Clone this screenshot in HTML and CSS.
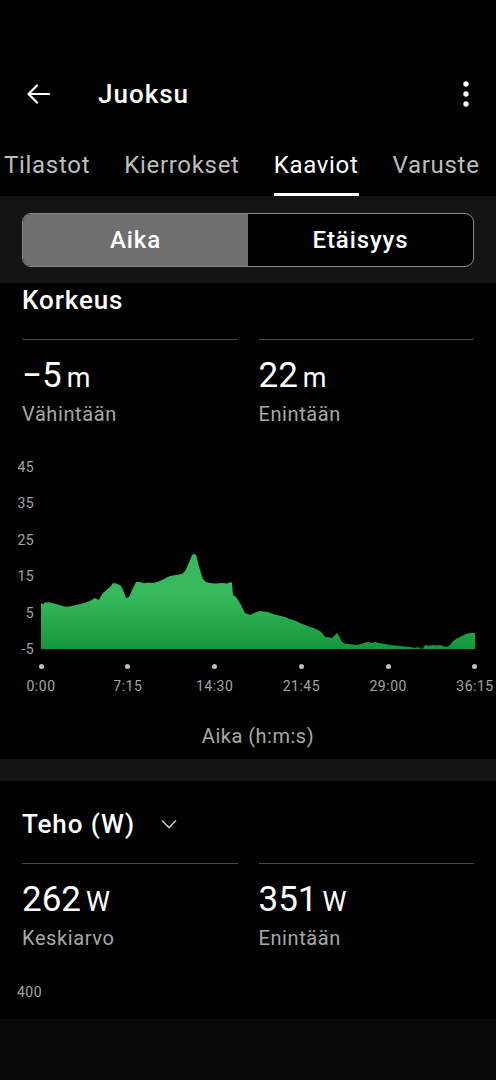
FILE: index.html
```html
<!DOCTYPE html>
<html lang="fi">
<head>
  <meta charset="UTF-8" />
  <title>Juoksu – Kaaviot</title>
  <link rel="stylesheet" href="styles.css">
</head>
<body>

  <div class="appbar">
    <svg class="back" width="24" height="24" viewBox="0 0 24 24">
      <path d="M23 12H3 M11 3.5L2.5 12L11 20.5" fill="none" stroke="#fff" stroke-width="2.2" stroke-linecap="round" stroke-linejoin="round"/>
    </svg>
    <div class="title">Juoksu</div>
    <svg class="kebab" width="8" height="26" viewBox="0 0 8 26">
      <circle cx="4" cy="3" r="2.7" fill="#fff"/>
      <circle cx="4" cy="13" r="2.7" fill="#fff"/>
      <circle cx="4" cy="23" r="2.7" fill="#fff"/>
    </svg>
  </div>

  <div class="tabs">
    <div class="tab">Tilastot</div>
    <div class="tab">Kierrokset</div>
    <div class="tab active">Kaaviot</div>
    <div class="tab">Varuste</div>
  </div>

  <div class="band">
    <div class="segment">
      <div class="seg on">Aika</div>
      <div class="seg">Etäisyys</div>
    </div>
  </div>

  <!-- korkeus -->
  <div class="section first">
    <div class="heading">Korkeus</div>
    <div class="stats">
      <div class="stat">
        <div class="val"><span class="num">−5</span><span class="unit">m</span></div>
        <div class="lbl">Vähintään</div>
      </div>
      <div class="stat">
        <div class="val"><span class="num">22</span><span class="unit">m</span></div>
        <div class="lbl">Enintään</div>
      </div>
    </div>
  </div>

  <div class="chart">
    <div class="yaxis">
      <span>45</span><span>35</span><span>25</span><span>15</span><span>5</span><span>-5</span>
    </div>
    <svg class="plot" width="434" height="191" viewBox="0 0 434 191">
      <defs>
        <linearGradient id="green" x1="0" y1="0" x2="0" y2="1">
          <stop offset="0.45" stop-color="#37b85c"/>
          <stop offset="1" stop-color="#14963c"/>
        </linearGradient>
      </defs>
      <path fill="url(#green)" d="M0 190 L0 144 L2 145 L4 143.5 L8 143.2 L11 144 L16 145.2 L20 146.5 L25 147.7 L30 147.2 L35 146 L39 145 L44 143.8 L49 142 L52 140.2 L54 139 L56 140 L58 141 L60 137 L62 134 L66 130.5 L69 128 L72 124 L75 124.5 L79 126 L81 128.5 L82 131 L84 136 L85 139 L88 138 L91 131 L95 123 L99 123 L103 124.2 L108 123.5 L112 124 L116 123 L121 121 L125 119 L129 117 L135 116 L141 115 L144 112 L146 108 L149 101 L151 96 L153 95 L155 96 L156 99 L157 104 L160 114 L162 120 L165 123 L169 124 L175 124.5 L181 124 L186 124.6 L190 123 L191 124 L192 136 L195 138 L197 141 L200 146 L204 154 L209 156 L213 154 L219 152 L223 152.6 L227 153 L232 155 L238 156.5 L244 158 L248 159.8 L252 161 L255 162 L259 164 L263 165.5 L269 168 L273 169 L279 172 L282 175 L284 178 L288 178.2 L291 179 L294 176 L296 174 L298 177 L301 183 L304 184.5 L307 185 L312 185.6 L316 186 L320 185 L324 183.4 L327 183 L331 184 L334 183 L338 184 L344 185 L350 186.2 L355 186.6 L359 187 L364 187.5 L369 188 L374 189 L377 188 L379 189.5 L381 190 L383 188 L384 186 L388 186.8 L392 186 L396 186.4 L399 186 L402 187 L406 188 L409 186 L411 183 L415 180 L419 178 L424 175.5 L429 174 L434 174 L434 190 Z"/>
    </svg>
  </div>

  <div class="xaxis">
    <div class="tick"><i></i><span>0:00</span></div>
    <div class="tick"><i></i><span>7:15</span></div>
    <div class="tick"><i></i><span>14:30</span></div>
    <div class="tick"><i></i><span>21:45</span></div>
    <div class="tick"><i></i><span>29:00</span></div>
    <div class="tick"><i></i><span>36:15</span></div>
  </div>

  <div class="xtitle">Aika (h:m:s)</div>

  <div class="gap"></div>

  <!-- teho -->
  <div class="section">
    <div class="heading">Teho (W)
      <svg class="chev" width="16" height="10" viewBox="0 0 16 10">
        <path d="M1 1.5L8 8.5L15 1.5" fill="none" stroke="#c4c4c4" stroke-width="1.6"/>
      </svg>
    </div>
    <div class="stats">
      <div class="stat">
        <div class="val"><span class="num">262</span><span class="unit">W</span></div>
        <div class="lbl">Keskiarvo</div>
      </div>
      <div class="stat">
        <div class="val"><span class="num">351</span><span class="unit">W</span></div>
        <div class="lbl">Enintään</div>
      </div>
    </div>
  </div>

  <div class="ylabel">400</div>

  <div class="bottom"></div>

</body>
</html>
```

FILE: styles.css
```css
body {
  margin: 0;
  background: #000;
  color: #fff;
  font-family: Roboto, "Noto Sans", sans-serif;
  width: 496px;
  overflow: hidden;
}
.appbar {
  display: flex;
  align-items: center;
  height: 68px;
  padding: 60px 26px 0 26px;
}
.title {
  margin-left: 48px;
  font-size: 26px;
  font-weight: 500;
  letter-spacing: 1px;
  flex: 1;
}
.tabs {
  display: flex;
  gap: 34px;
  padding-left: 4px;
  white-space: nowrap;
  overflow: hidden;
}
.tab {
  font-size: 24px;
  line-height: 28px;
  letter-spacing: 0.7px;
  padding: 23px 0 14px;
  color: #bdbdbd;
  border-bottom: 3px solid transparent;
}
.tab.active {
  color: #fff;
  border-bottom-color: #fff;
}
.band {
  background: #141414;
  padding: 17px 22px 16px;
}
.segment {
  display: grid;
  grid-template-columns: 1fr 1fr;
  height: 52px;
  border: 1px solid #8a8a8a;
  border-radius: 9px;
  overflow: hidden;
  background: #000;
}
.seg {
  display: flex;
  align-items: center;
  justify-content: center;
  font-size: 24px;
  font-weight: 500;
  letter-spacing: 0.9px;
}
.seg.on {
  background: #6f6f6f;
}
.section {
  padding: 28px 22px 0;
}
.section.first {
  padding-top: 2px;
}
.heading {
  display: flex;
  align-items: center;
  font-size: 26px;
  line-height: 30px;
  font-weight: 500;
  letter-spacing: 0.9px;
}
.chev {
  margin-left: 26px;
}
.stats {
  display: grid;
  grid-template-columns: 1fr 1fr;
  gap: 21px;
  margin-top: 24px;
}
.stat {
  border-top: 1.5px solid #4a4a4a;
  padding-top: 16px;
}
.val {
  display: flex;
  align-items: baseline;
  height: 40px;
}
.num {
  font-size: 35px;
  line-height: 40px;
}
.unit {
  font-size: 27px;
  line-height: 40px;
  margin-left: 5px;
}
.lbl {
  margin-top: 6px;
  font-size: 20px;
  line-height: 24px;
  letter-spacing: 0.6px;
  color: #a8a8a8;
}
.chart {
  display: flex;
  margin-top: 33px;
  height: 198px;
}
.yaxis {
  width: 34px;
  padding-right: 7px;
  display: flex;
  flex-direction: column;
  justify-content: space-between;
  align-items: flex-end;
  font-size: 14px;
  line-height: 16px;
  letter-spacing: 0.4px;
  color: #a4a4a4;
}
.xaxis {
  display: flex;
  justify-content: space-between;
  padding: 0 1px 0 21px;
}
.tick {
  width: 40px;
  display: flex;
  flex-direction: column;
  align-items: center;
  font-size: 14px;
  line-height: 16px;
  letter-spacing: 0.5px;
  color: #a4a4a4;
}
.tick i {
  width: 5px;
  height: 5px;
  border-radius: 50%;
  background: #bdbdbd;
  margin-top: 6.5px;
  margin-bottom: 9.5px;
}
.xtitle {
  margin: 30px 21px 11px 41px;
  text-align: center;
  font-size: 20px;
  line-height: 24px;
  letter-spacing: 0.5px;
  color: #a8a8a8;
}
.gap {
  height: 22px;
  background: #141414;
}
.ylabel {
  margin-top: 34px;
  padding-left: 17px;
  font-size: 14px;
  line-height: 16px;
  letter-spacing: 0.5px;
  color: #a4a4a4;
}
.bottom {
  margin-top: 19px;
  height: 70px;
  background: #080808;
}
```
